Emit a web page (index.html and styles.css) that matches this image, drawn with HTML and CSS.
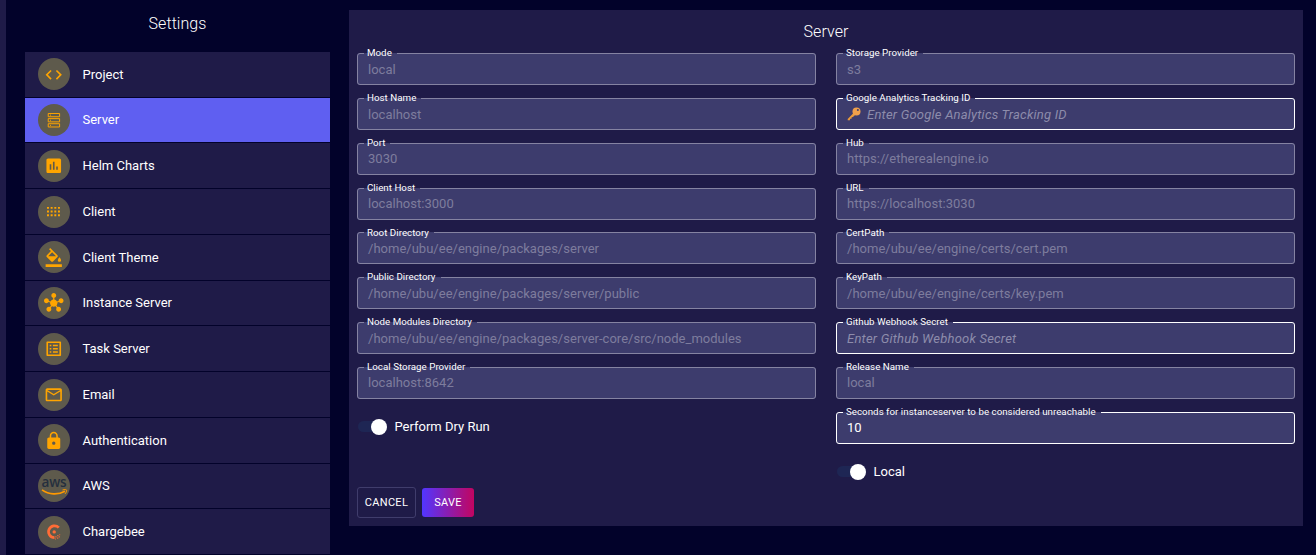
FILE: index.html
```html
<!DOCTYPE html>
<html lang="en">
<head>
<meta charset="utf-8">
<title>Settings</title>
<link rel="stylesheet" href="styles.css">
</head>
<body>
<div class="app">
  <div class="rail"></div>
  <aside class="sidebar">
    <h1 class="heading">Settings</h1>
    <nav class="menu">
      <a class="item"><span class="avatar"><svg class="icon" viewBox="0 0 24 24"><path d="M9.4 16.6 4.8 12l4.6-4.6L8 6l-6 6 6 6zm5.2 0 4.6-4.6-4.6-4.6L16 6l6 6-6 6z"/></svg></span>Project</a>
      <a class="item active"><span class="avatar"><svg class="icon line" viewBox="0 0 24 24"><path d="M5.2 4.3h14v4h-14zM5.2 10.6h14v4h-14zM5.2 16.9h14v4h-14zM8 5.7v1.2M8 12v1.2M8 18.3v1.2"/></svg></span>Server</a>
      <a class="item"><span class="avatar"><svg class="icon" viewBox="0 0 24 24"><path d="M19 3H5c-1.1 0-2 .9-2 2v14c0 1.100.9 2 2 2h14c1.100 0 2-.9 2-2V5c0-1.100-.9-2-2-2M9 17H7v-7h2zm4 0h-2V7h2zm4 0h-2v-4h2z"/></svg></span>Helm Charts</a>
      <a class="item"><span class="avatar"><svg class="icon" viewBox="0 0 24 24"><path d="M3.700 6h2.400v2.400H3.700zM8.200 6h2.400v2.400H8.200zM12.700 6h2.400v2.400h-2.400zM17.200 6h2.400v2.400h-2.400zM3.700 10.500h2.400v2.400H3.700zM8.200 10.500h2.400v2.400H8.200zM12.700 10.500h2.400v2.400h-2.400zM17.200 10.500h2.400v2.400h-2.400zM3.700 15h2.400v2.400H3.700zM8.200 15h2.400v2.400H8.200zM12.700 15h2.400v2.400h-2.400zM17.200 15h2.400v2.400h-2.400z"/></svg></span>Client</a>
      <a class="item"><span class="avatar"><svg class="icon" viewBox="0 0 24 24"><path d="M16.560 8.940 7.620 0 6.210 1.410l2.380 2.380-5.150 5.150c-.59.59-.59 1.540 0 2.120l5.500 5.500c.29.29.68.44 1.060.44s.77-.15 1.060-.44l5.500-5.500c.59-.58.59-1.530 0-2.120M5.210 10 10 5.210 14.790 10zM19 11.500s-2 2.170-2 3.500c0 1.100.9 2 2 2s2-.9 2-2c0-1.330-2-3.500-2-3.500M2 20h20v4H2z"/></svg></span>Client Theme</a>
      <a class="item"><span class="avatar"><svg class="icon" viewBox="0 0 24 24"><path d="M8.400 18.200c.38.5.6 1.120.6 1.800 0 1.660-1.340 3-3 3s-3-1.340-3-3 1.340-3 3-3c.44 0 .85.09 1.230.26l1.410-1.770c-.92-1.030-1.290-2.390-1.090-3.690l-2.030-.68c-.54.83-1.460 1.380-2.520 1.380-1.660 0-3-1.340-3-3s1.340-3 3-3 3 1.340 3 3c0 .07 0 .14-.01.21l2.030.68c.64-1.210 1.820-2.090 3.220-2.320V5.910C9.960 5.570 9 4.400 9 3c0-1.660 1.340-3 3-3s3 1.340 3 3c0 1.400-.96 2.570-2.250 2.910v2.160c1.400.23 2.580 1.110 3.220 2.320L18 9.710V9.500c0-1.660 1.340-3 3-3s3 1.340 3 3-1.340 3-3 3c-1.060 0-1.980-.55-2.520-1.370l-2.030.68c.2 1.290-.16 2.650-1.090 3.690l1.410 1.770Q17.340 17 18 17c1.660 0 3 1.340 3 3s-1.340 3-3 3-3-1.340-3-3c0-.68.22-1.300.6-1.800l-1.410-1.770c-1.350.75-3.010.76-4.370 0z"/></svg></span>Instance Server</a>
      <a class="item"><span class="avatar"><svg class="icon" viewBox="0 0 24 24"><path d="M19 5v14H5V5zm1.100-2H3.900c-.5 0-.9.4-.9.9v16.200c0 .4.4.9.9.9h16.200c.4 0 .9-.5.9-.9V3.900c0-.5-.5-.9-.9-.9M11 7h6v2h-6zm0 4h6v2h-6zm0 4h6v2h-6zM7 7h2v2H7zm0 4h2v2H7zm0 4h2v2H7z"/></svg></span>Task Server</a>
      <a class="item"><span class="avatar"><svg class="icon" viewBox="0 0 24 24"><path d="M20 4H4c-1.100 0-2 .9-2 2v12c0 1.100.9 2 2 2h16c1.100 0 2-.9 2-2V6c0-1.100-.9-2-2-2m0 14H4V8l8 5 8-5zm-8-7L4 6h16z"/></svg></span>Email</a>
      <a class="item"><span class="avatar"><svg class="icon" viewBox="0 0 24 24"><path d="M18 8h-1V6c0-2.760-2.240-5-5-5S7 3.240 7 6v2H6c-1.100 0-2 .9-2 2v10c0 1.100.9 2 2 2h12c1.100 0 2-.9 2-2V10c0-1.100-.9-2-2-2m-6 9c-1.100 0-2-.9-2-2s.9-2 2-2 2 .9 2 2-.9 2-2 2m3.100-9H8.900V6c0-1.710 1.390-3.100 3.100-3.100s3.100 1.390 3.100 3.100z"/></svg></span>Authentication</a>
      <a class="item"><span class="avatar aws"><span class="aws-name">aws</span><svg class="smile" viewBox="0 0 27 7"><path d="M1 .8C8 5.900 17 6.100 24 2.300" fill="none" stroke="#ff9900" stroke-width="1.600"/><path d="M21.500 1c2.200-.6 3.800-.4 4.100 0 .3.700-.4 2.700-1.600 3.900" fill="none" stroke="#ff9900"/></svg></span>AWS</a>
      <a class="item"><span class="avatar"><svg class="bee" viewBox="0 0 16 16"><path d="M12.800 3.700A5.900 5.900 0 1 0 8.500 13.600" fill="none" stroke="#ff6c36" stroke-width="2.700"/><circle cx="8.200" cy="7.900" r="1.700" fill="#ff6c36"/><path d="M9.200 12.200h1.400v1.200H9.200zM11.200 11h1.300v1.200h-1.300zM12.700 12.200h1.200v1.200h-1.200zM11 13.500h1.300v1.200H11zM13.200 10.200h1v1h-1zM9 14.400h1v1H9z" fill="#e8683a"/></svg></span>Chargebee</a>
    </nav>
  </aside>
  <main class="panel">
    <h2 class="heading">Server</h2>
    <div class="columns">
      <div class="column">
        <div class="field"><fieldset class="outline"><legend>Mode</legend></fieldset><span class="value">local</span></div>
        <div class="field"><fieldset class="outline"><legend>Host Name</legend></fieldset><span class="value">localhost</span></div>
        <div class="field"><fieldset class="outline"><legend>Port</legend></fieldset><span class="value">3030</span></div>
        <div class="field"><fieldset class="outline"><legend>Client Host</legend></fieldset><span class="value">localhost:3000</span></div>
        <div class="field"><fieldset class="outline"><legend>Root Directory</legend></fieldset><span class="value">/home/ubu/ee/engine/packages/server</span></div>
        <div class="field"><fieldset class="outline"><legend>Public Directory</legend></fieldset><span class="value">/home/ubu/ee/engine/packages/server/public</span></div>
        <div class="field"><fieldset class="outline"><legend>Node Modules Directory</legend></fieldset><span class="value">/home/ubu/ee/engine/packages/server-core/src/node_modules</span></div>
        <div class="field"><fieldset class="outline"><legend>Local Storage Provider</legend></fieldset><span class="value">localhost:8642</span></div>
        <label class="toggle"><span class="switch"><span class="thumb"></span></span>Perform Dry Run</label>
      </div>
      <div class="column">
        <div class="field"><fieldset class="outline"><legend>Storage Provider</legend></fieldset><span class="value">s3</span></div>
        <div class="field editable"><fieldset class="outline"><legend>Google Analytics Tracking ID</legend></fieldset><svg class="key" viewBox="0 0 14 14"><path d="M7 5.600.7 11.900v1.300h2.200l.2-1.400 1.400-.1.200-1.400 1.300-.2 2.300-2.300z" fill="#e99a3c"/><circle cx="9.500" cy="4.500" r="4" fill="#f0a04b"/><circle cx="10.900" cy="3.100" r="1" fill="#3d3c6d"/></svg><span class="value hint">Enter Google Analytics Tracking ID</span></div>
        <div class="field"><fieldset class="outline"><legend>Hub</legend></fieldset><span class="value">https://etherealengine.io</span></div>
        <div class="field"><fieldset class="outline"><legend>URL</legend></fieldset><span class="value">https://localhost:3030</span></div>
        <div class="field"><fieldset class="outline"><legend>CertPath</legend></fieldset><span class="value">/home/ubu/ee/engine/certs/cert.pem</span></div>
        <div class="field"><fieldset class="outline"><legend>KeyPath</legend></fieldset><span class="value">/home/ubu/ee/engine/certs/key.pem</span></div>
        <div class="field editable"><fieldset class="outline"><legend>Github Webhook Secret</legend></fieldset><span class="value hint">Enter Github Webhook Secret</span></div>
        <div class="field"><fieldset class="outline"><legend>Release Name</legend></fieldset><span class="value">local</span></div>
        <div class="field editable"><fieldset class="outline"><legend>Seconds for instanceserver to be considered unreachable</legend></fieldset><span class="value">10</span></div>
        <label class="toggle"><span class="switch"><span class="thumb"></span></span>Local</label>
      </div>
    </div>
    <div class="actions"><button class="btn cancel">CANCEL</button><button class="btn save">SAVE</button></div>
  </main>
</div>
</body>
</html>
```

FILE: styles.css
```css
* { box-sizing: border-box; }

body {
  margin: 0;
  height: 555px;
  overflow: hidden;
  background: #02022a;
  color: #fff;
  font: 400 13px/1.5 Roboto, sans-serif;
}

.app { display: flex; height: 555px; }
.rail { width: 6px; background: #1f1b48; }

.heading {
  margin: 0;
  font-size: 16px;
  font-weight: 300;
  line-height: 24px;
  letter-spacing: 0.05px;
  text-align: center;
}

.sidebar { width: 305px; margin-left: 19px; padding-top: 12px; }
.menu { margin-top: 15.9px; }

.item {
  display: flex;
  align-items: center;
  gap: 12.5px;
  height: 45.75px;
  padding: 0 13px;
  border-bottom: 1px solid #02022a;
  background: #1f1b48;
}
.item.active { background: #5f5ff1; }

.avatar {
  display: flex;
  align-items: center;
  justify-content: center;
  width: 32px;
  height: 32px;
  border-radius: 50%;
  background: #5e5a4c;
}
.icon { width: 19.5px; height: 19.5px; fill: #ffa500; }
.icon.line { fill: none; stroke: #ffa500; stroke-width: 1.2; }
.avatar.aws { flex-direction: column; }
.aws-name {
  color: #252f3e;
  font: 600 13.5px/11px "Open Sans", sans-serif;
  letter-spacing: -0.2px;
}
.smile { width: 27px; height: 7px; margin-top: 1px; }
.bee { width: 16px; height: 16px; }

.panel {
  width: 954px;
  height: 516px;
  margin: 10px 0 0 19px;
  padding: 10px 8px 9px;
  background: #1f1b48;
}

.columns { display: flex; gap: 20px; height: 443px; padding-top: 9.35px; }
.column { flex: 1; }

.field {
  position: relative;
  display: flex;
  align-items: center;
  height: 32px;
  margin-bottom: 12.785px;
  padding: 0 11px;
  border-radius: 3px;
  background: #3d3c6d;
}
.outline {
  position: absolute;
  inset: -6px 0 0;
  min-width: 0;
  margin: 0;
  padding: 0 6px;
  border: 1px solid #8583a2;
  border-radius: 3px;
}
.outline legend {
  position: relative;
  top: 0.06px;
  height: 13px;
  padding: 0 5px 0 3px;
  font-size: 9.75px;
  line-height: 12px;
  letter-spacing: 0.02px;
  white-space: nowrap;
}
.editable .outline { border-color: #fff; }
.value { color: #7e7c9d; line-height: 19px; letter-spacing: 0.015px; }
.editable .value { color: #fff; }
.editable .hint { color: #8d8cab; font-style: italic; letter-spacing: 0.21px; }
.key { width: 14px; height: 14px; margin-right: 6px; }

.toggle { display: flex; align-items: center; gap: 6.5px; height: 24px; margin-top: 16px; }
.switch {
  display: flex;
  align-items: center;
  justify-content: flex-end;
  width: 29px;
  height: 11px;
  margin: 0 1px;
  border-radius: 6px;
  background: #1e2654;
}
.thumb { width: 16px; height: 16px; border-radius: 50%; background: #fff; }

.actions { display: flex; align-items: center; gap: 6px; }
.btn {
  height: 31px;
  padding: 0;
  border: 0;
  border-radius: 3px;
  background: none;
  color: #fff;
  font: 400 11px/18px Roboto, sans-serif;
  letter-spacing: 0.3px;
}
.cancel { width: 59px; border: 1px solid #403d6c; }
.save { width: 52px; height: 29px; background: linear-gradient(90deg, #5236ff, #c20560); }
```
